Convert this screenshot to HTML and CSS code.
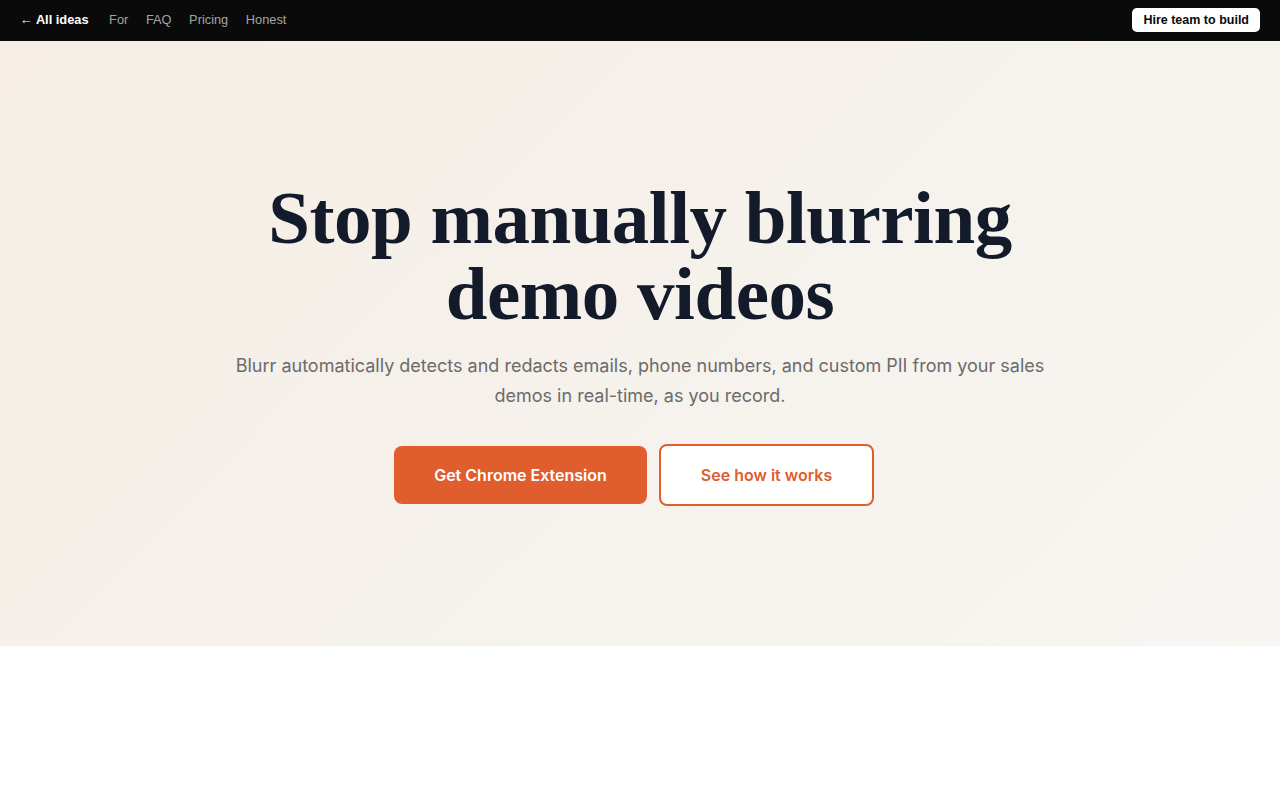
FILE: index.html
```html
<!DOCTYPE html>
<html lang="en">
<head>
<meta charset="utf-8">
<title>Blurr</title>
<link rel="stylesheet" href="styles.css">
</head>
<body>
<nav class="topbar">
  <div class="nav-left">
    <a class="back" href="#">← All ideas</a>
    <a class="nav-link" href="#">For</a>
    <a class="nav-link" href="#">FAQ</a>
    <a class="nav-link" href="#">Pricing</a>
    <a class="nav-link" href="#">Honest</a>
  </div>
  <a class="hire" href="#">Hire team to build</a>
</nav>
<section class="hero">
  <h1 class="title">Stop manually blurring<br>demo videos</h1>
  <p class="lead">Blurr automatically detects and redacts emails, phone numbers, and custom PII from your sales demos in real-time, as you record.</p>
  <div class="actions">
    <a class="btn btn-primary" href="#">Get Chrome Extension</a>
    <a class="btn btn-outline" href="#">See how it works</a>
  </div>
</section>
<section class="below"></section>
</body>
</html>
```

FILE: styles.css
```css
* { box-sizing: border-box; }
html, body { margin: 0; padding: 0; }
body { background: #ffffff; font-family: "Inter", "Liberation Sans", sans-serif; }
a { text-decoration: none; }

.topbar {
  height: 41px;
  background: #0a0a0a;
  display: flex;
  align-items: center;
  justify-content: space-between;
  padding: 0 20px 0 20px;
  font-family: "Liberation Sans", Arial, sans-serif;
  font-size: 13px;
}
.nav-left { display: flex; align-items: center; gap: 17.6px; margin-top: -2px; }
.back { color: #ffffff; font-weight: bold; margin-right: 3px; font-size: 12.8px; }
.nav-link { color: #a3a3a3; font-size: 12.8px; }
.hire {
  background: #ffffff;
  color: #0a0a0a;
  font-weight: bold;
  font-size: 12.5px;
  padding: 5px 11px;
  border-radius: 5px;
  line-height: 14px;
  margin-top: -1px;
}

.hero {
  height: 605px;
  background: linear-gradient(135deg, #f6eee5 0%, #f5f0ea 40%, #f8f6f2 100%);
  display: flex;
  flex-direction: column;
  align-items: center;
  padding-top: 139px;
}
.title {
  margin: 0;
  font-family: "Liberation Serif", "Times New Roman", serif;
  font-weight: bold;
  font-size: 75px;
  line-height: 76px;
  color: #131b2b;
  text-align: center;
  letter-spacing: -0.5px;
}
.lead {
  margin: 19px 0 0;
  max-width: 820px;
  text-align: center;
  font-size: 18px;
  line-height: 30px;
  color: #6b6b6b;
}
.actions {
  display: flex;
  align-items: center;
  gap: 12px;
  margin-top: 33px;
  padding-right: 12px;
}
.btn {
  display: inline-flex;
  align-items: center;
  justify-content: center;
  font-size: 16px;
  font-weight: 600;
  border-radius: 8px;
}
.btn-primary {
  background: #e05d2e;
  color: #ffffff;
  width: 253px;
  height: 58px;
}
.btn-outline {
  background: #ffffff;
  color: #e05d2e;
  border: 2px solid #e05d2e;
  width: 215px;
  height: 62px;
}
.below { height: 154px; background: #ffffff; }
```
